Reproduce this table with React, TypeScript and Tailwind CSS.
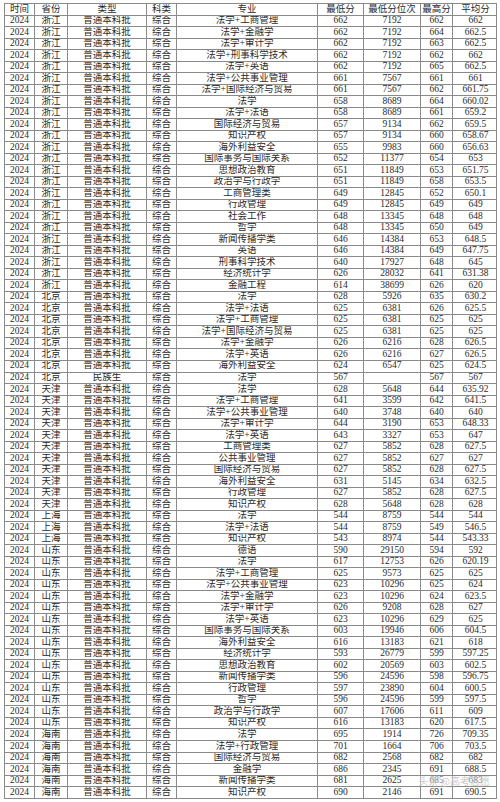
import React from "react";

type Row = [string, string, string, string, string, string, string];

const HEAD = ["时间", "省份", "类型", "科类", "专业", "最低分", "最低分位次", "最高分", "平均分"];

// [省份, 类型, 专业, 最低分, 最低分位次, 最高分, 平均分]
const ROWS: Row[] = [
  ["浙江", "普通本科批", "法学+工商管理", "662", "7192", "662", "662"],
  ["浙江", "普通本科批", "法学+金融学", "662", "7192", "664", "662.5"],
  ["浙江", "普通本科批", "法学+审计学", "662", "7192", "663", "662.5"],
  ["浙江", "普通本科批", "法学+刑事科学技术", "662", "7192", "662", "662"],
  ["浙江", "普通本科批", "法学+英语", "662", "7192", "665", "662.5"],
  ["浙江", "普通本科批", "法学+公共事业管理", "661", "7567", "661", "661"],
  ["浙江", "普通本科批", "法学+国际经济与贸易", "661", "7567", "662", "661.75"],
  ["浙江", "普通本科批", "法学", "658", "8689", "664", "660.02"],
  ["浙江", "普通本科批", "法学+法语", "658", "8689", "661", "659.2"],
  ["浙江", "普通本科批", "国际经济与贸易", "657", "9134", "662", "659.5"],
  ["浙江", "普通本科批", "知识产权", "657", "9134", "660", "658.67"],
  ["浙江", "普通本科批", "海外利益安全", "655", "9983", "660", "656.63"],
  ["浙江", "普通本科批", "国际事务与国际关系", "652", "11377", "654", "653"],
  ["浙江", "普通本科批", "思想政治教育", "651", "11849", "653", "651.75"],
  ["浙江", "普通本科批", "政治学与行政学", "651", "11849", "658", "653.5"],
  ["浙江", "普通本科批", "工商管理类", "649", "12845", "652", "650.1"],
  ["浙江", "普通本科批", "行政管理", "649", "12845", "649", "649"],
  ["浙江", "普通本科批", "社会工作", "648", "13345", "648", "648"],
  ["浙江", "普通本科批", "哲学", "648", "13345", "650", "649"],
  ["浙江", "普通本科批", "新闻传播学类", "646", "14384", "653", "648.5"],
  ["浙江", "普通本科批", "英语", "646", "14384", "649", "647.75"],
  ["浙江", "普通本科批", "刑事科学技术", "640", "17927", "648", "645"],
  ["浙江", "普通本科批", "经济统计学", "626", "28032", "641", "631.38"],
  ["浙江", "普通本科批", "金融工程", "614", "38699", "626", "620"],
  ["北京", "普通本科批", "法学", "628", "5926", "635", "630.2"],
  ["北京", "普通本科批", "法学+法语", "625", "6381", "626", "625.5"],
  ["北京", "普通本科批", "法学+工商管理", "625", "6381", "625", "625"],
  ["北京", "普通本科批", "法学+国际经济与贸易", "625", "6381", "625", "625"],
  ["北京", "普通本科批", "法学+金融学", "626", "6216", "628", "626.5"],
  ["北京", "普通本科批", "法学+英语", "626", "6216", "627", "626.5"],
  ["北京", "普通本科批", "海外利益安全", "624", "6547", "625", "624.5"],
  ["北京", "民族生", "法学", "567", "", "567", "567"],
  ["天津", "普通本科批", "法学", "628", "5648", "644", "635.92"],
  ["天津", "普通本科批", "法学+工商管理", "641", "3599", "642", "641.5"],
  ["天津", "普通本科批", "法学+公共事业管理", "640", "3748", "640", "640"],
  ["天津", "普通本科批", "法学+审计学", "644", "3190", "653", "648.33"],
  ["天津", "普通本科批", "法学+英语", "643", "3327", "653", "647"],
  ["天津", "普通本科批", "工商管理类", "627", "5852", "628", "627.5"],
  ["天津", "普通本科批", "公共事业管理", "627", "5852", "627", "627"],
  ["天津", "普通本科批", "国际经济与贸易", "627", "5852", "628", "627.5"],
  ["天津", "普通本科批", "海外利益安全", "631", "5145", "634", "632.5"],
  ["天津", "普通本科批", "行政管理", "627", "5852", "628", "627.5"],
  ["天津", "普通本科批", "知识产权", "628", "5648", "628", "628"],
  ["上海", "普通本科批", "法学", "544", "8759", "544", "544"],
  ["上海", "普通本科批", "法学+法语", "544", "8759", "549", "546.5"],
  ["上海", "普通本科批", "知识产权", "543", "8974", "544", "543.33"],
  ["山东", "普通本科批", "德语", "590", "29150", "594", "592"],
  ["山东", "普通本科批", "法学", "617", "12753", "626", "620.19"],
  ["山东", "普通本科批", "法学+工商管理", "625", "9573", "625", "625"],
  ["山东", "普通本科批", "法学+公共事业管理", "623", "10296", "625", "624"],
  ["山东", "普通本科批", "法学+金融学", "623", "10296", "624", "623.5"],
  ["山东", "普通本科批", "法学+审计学", "626", "9208", "628", "627"],
  ["山东", "普通本科批", "法学+英语", "623", "10296", "629", "625"],
  ["山东", "普通本科批", "国际事务与国际关系", "603", "19946", "606", "604.5"],
  ["山东", "普通本科批", "海外利益安全", "616", "13183", "621", "618"],
  ["山东", "普通本科批", "经济统计学", "593", "26779", "599", "597.25"],
  ["山东", "普通本科批", "思想政治教育", "602", "20569", "603", "602.5"],
  ["山东", "普通本科批", "新闻传播学类", "596", "24596", "598", "596.75"],
  ["山东", "普通本科批", "行政管理", "597", "23890", "604", "600.5"],
  ["山东", "普通本科批", "哲学", "596", "24596", "599", "597.5"],
  ["山东", "普通本科批", "政治学与行政学", "607", "17606", "611", "609"],
  ["山东", "普通本科批", "知识产权", "616", "13183", "620", "617.5"],
  ["海南", "普通本科批", "法学", "695", "1914", "726", "709.35"],
  ["海南", "普通本科批", "法学+行政管理", "701", "1664", "706", "703.5"],
  ["海南", "普通本科批", "国际经济与贸易", "682", "2568", "682", "682"],
  ["海南", "普通本科批", "金融学", "686", "2345", "691", "688.5"],
  ["海南", "普通本科批", "新闻传播学类", "681", "2625", "685", "683"],
  ["海南", "普通本科批", "知识产权", "690", "2146", "691", "690.5"],
];

const grid = "grid grid-cols-[30px_33px_79px_30px_141px_46px_57px_32px_45px]";
const cell = "flex items-center justify-center border-r border-[#8a8a8a] leading-none whitespace-nowrap overflow-hidden";

function Line({ cells }: { cells: string[] }) {
  return (
    <div className={`${grid} h-[11.53px] border-b border-[#8a8a8a]`}>
      {cells.map((c, i) => (
        <div key={i} className={`${cell} ${i === 8 ? "border-r-0" : ""}`}>
          {c}
        </div>
      ))}
    </div>
  );
}

export default function App() {
  return (
    <div className="w-[500px] h-[802px] bg-white pt-[3px] pl-[4px] font-['Liberation_Serif','Noto_Sans_CJK_SC',serif] text-[9.5px] text-[#2a2a2a]">
      <div className="relative w-[493px] border-l border-r border-t border-[#8a8a8a]">
        <Line cells={HEAD} />
        {ROWS.map((r, i) => (
          <Line key={i} cells={["2024", r[0], r[1], "综合", r[2], r[3], r[4], r[5], r[6]]} />
        ))}
        {/* watermark */}
        <div className="absolute right-[4px] bottom-[13px] text-[10px] leading-none text-[#bdbdbd]/80 font-['Noto_Sans_CJK_SC',sans-serif] bg-white/40 px-[2px]">
          头条 @高考志愿
        </div>
      </div>
    </div>
  );
}
